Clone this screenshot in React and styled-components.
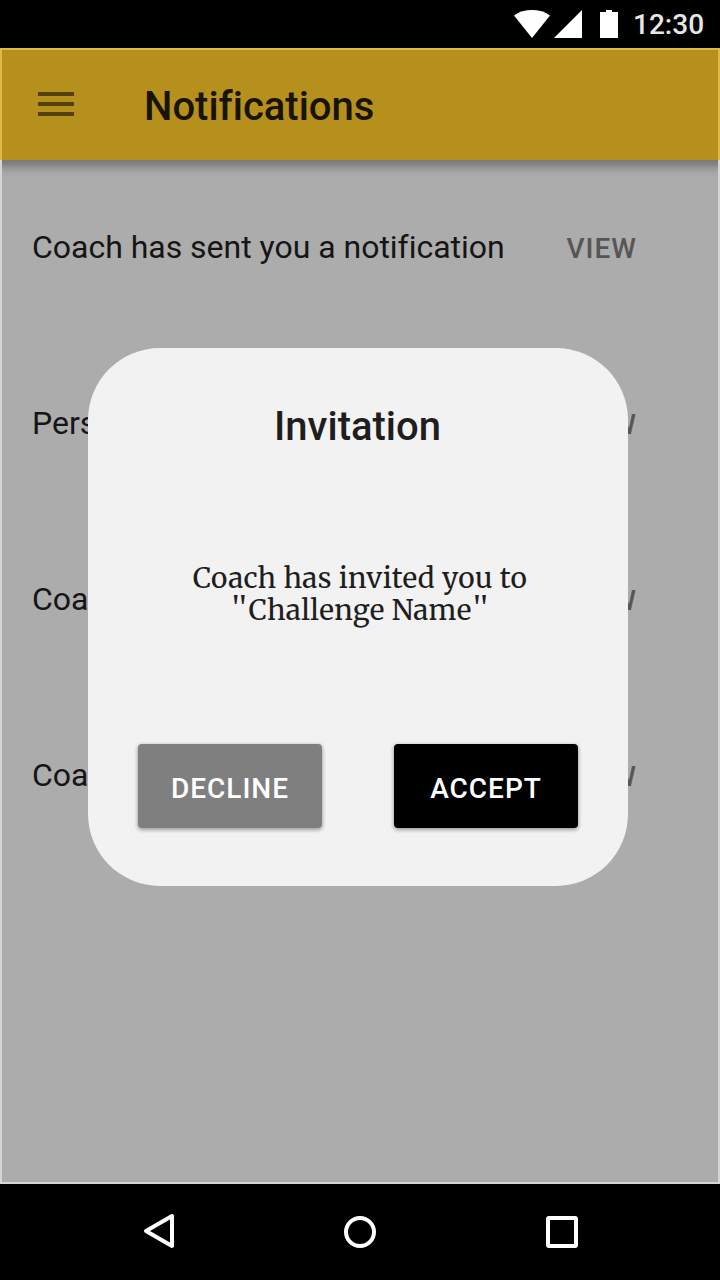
import React from "react";
import styled, { createGlobalStyle } from "styled-components";

const GlobalStyle = createGlobalStyle`
  * { box-sizing: border-box; }
  body { margin: 0; background: #000; }
`;

const Phone = styled.div`
  width: 720px;
  height: 1280px;
  display: flex;
  flex-direction: column;
  background: #000;
  font-family: Roboto, sans-serif;
  font-variant-ligatures: none;
  overflow: hidden;
`;

const StatusBar = styled.div`
  height: 48px;
  flex: none;
  display: flex;
  justify-content: flex-end;
  align-items: center;
  padding-right: 16px;
  gap: 13px;
`;

const StatusIcons = styled.svg`
  display: block;
  width: 106px;
  height: 48px;
  fill: #fff;
`;

const Clock = styled.span`
  width: 71px;
  font-size: 28px;
  line-height: 48px;
  padding-top: 2px;
  font-weight: 500;
  color: #e6e6e6;
`;

const Screen = styled.div`
  position: relative;
  flex: 1;
  display: flex;
  flex-direction: column;
`;

const AppBar = styled.header`
  height: 112px;
  flex: none;
  display: flex;
  align-items: center;
  padding-left: 36px;
  background: #b5901d;
  border: 2px solid #e1b941;
  border-bottom: 0;
`;

const MenuIcon = styled.svg`
  display: block;
  width: 36px;
  height: 24px;
  margin-bottom: 2px;
  fill: #53420d;
`;

const Title = styled.h1`
  margin: 4px 0 0 70px;
  font-size: 40px;
  line-height: 48px;
  font-weight: 500;
  color: #181303;
`;

const Content = styled.main`
  flex: 1;
  background: linear-gradient(#7a7a7a, #828282 4px, #979797 8px, #a6a6a6 13px, #acacac 18px);
  border: 2px solid #d5d5d5;
  border-top: 0;
`;

const Row = styled.div`
  height: 176px;
  display: flex;
  align-items: center;
  justify-content: space-between;
  padding: 0 81px 0 30px;
`;

const Message = styled.span`
  font-size: 32px;
  line-height: 40px;
  margin-bottom: 2px;
  letter-spacing: -0.02px;
  color: #151515;
`;

const ViewLink = styled.span`
  font-size: 28px;
  line-height: 36px;
  font-weight: 500;
  letter-spacing: 1px;
  margin-top: 2px;
  color: #565656;
`;

const Overlay = styled.div`
  position: absolute;
  inset: 0;
  padding: 300px 92px 0 88px;
`;

const Dialog = styled.section`
  height: 538px;
  border-radius: 72px;
  background: #f2f2f2;
  display: flex;
  flex-direction: column;
  align-items: center;
  padding-top: 55px;
  color: #1e1e1e;
`;

const DialogTitle = styled.h2`
  margin: 0 1px 0 0;
  font-size: 40px;
  line-height: 48px;
  font-weight: 500;
`;

const DialogText = styled.p`
  margin: 111px 0 0 4px;
  font-family: Merriweather, "DejaVu Serif Condensed", serif;
  font-size: 28px;
  line-height: 32px;
  letter-spacing: 0.32px;
  text-align: center;
  white-space: nowrap;
`;

const Line = styled.span`
  display: block;
  height: 32px;
`;

const Quote = styled.span`
  font-family: "Liberation Serif", serif;
  font-size: 38px;
  line-height: 0;
  padding: 0 1px;
`;

const Actions = styled.div`
  display: flex;
  gap: 72px;
  margin-top: 118px;
`;

const Button = styled.button`
  width: 184px;
  height: 84px;
  border: 0;
  border-radius: 4px;
  padding: 6px 0 0;
  background: ${(p) => (p.$primary ? "#000" : "#7f7f7f")};
  color: #fff;
  font: 500 28px/36px Roboto, sans-serif;
  letter-spacing: 1px;
  box-shadow: 0 2px 4px rgba(0, 0, 0, 0.24), 0 1px 4px rgba(0, 0, 0, 0.2);
`;

const NavBar = styled.nav`
  height: 96px;
  flex: none;
`;

const NavIcons = styled.svg`
  display: block;
  width: 720px;
  height: 96px;
  fill: none;
  stroke: #fff;
  stroke-width: 4;
  stroke-linejoin: round;
`;

const notifications = [
  "Coach has sent you a notification",
  "Person has sent you a message",
  "Coach has sent you a message",
  "Coach has sent you an invite",
];

export default function App() {
  return (
    <Phone>
      <GlobalStyle />
      <StatusBar>
        <StatusIcons viewBox="0 0 106 48">
          <path d="M0 15.5C10 8.2 26 8.2 36 15.5L18 38Z" />
          <path d="M68 10V38H40Z" />
          <path d="M86 12h6v-2h6v2h6v26h-18z" />
        </StatusIcons>
        <Clock>12:30</Clock>
      </StatusBar>
      <Screen>
        <AppBar>
          <MenuIcon viewBox="0 0 36 24">
            <path d="M0 0h36v4H0zM0 10h36v4H0zM0 20h36v4H0z" />
          </MenuIcon>
          <Title>Notifications</Title>
        </AppBar>
        <Content>
          {notifications.map((text) => (
            <Row key={text}>
              <Message>{text}</Message>
              <ViewLink>VIEW</ViewLink>
            </Row>
          ))}
        </Content>
        <Overlay>
          <Dialog>
            <DialogTitle>Invitation</DialogTitle>
            <DialogText>
              <Line>Coach has invited you to</Line>
              <Line>
                <Quote>"</Quote>Challenge Name<Quote>"</Quote>
              </Line>
            </DialogText>
            <Actions>
              <Button>DECLINE</Button>
              <Button $primary>ACCEPT</Button>
            </Actions>
          </Dialog>
        </Overlay>
      </Screen>
      <NavBar>
        <NavIcons viewBox="0 0 720 96">
          <path d="M146 47L172 32V62Z" />
          <circle cx="360" cy="48" r="14" />
          <rect x="548" y="34" width="28" height="28" rx="1" />
        </NavIcons>
      </NavBar>
    </Phone>
  );
}
